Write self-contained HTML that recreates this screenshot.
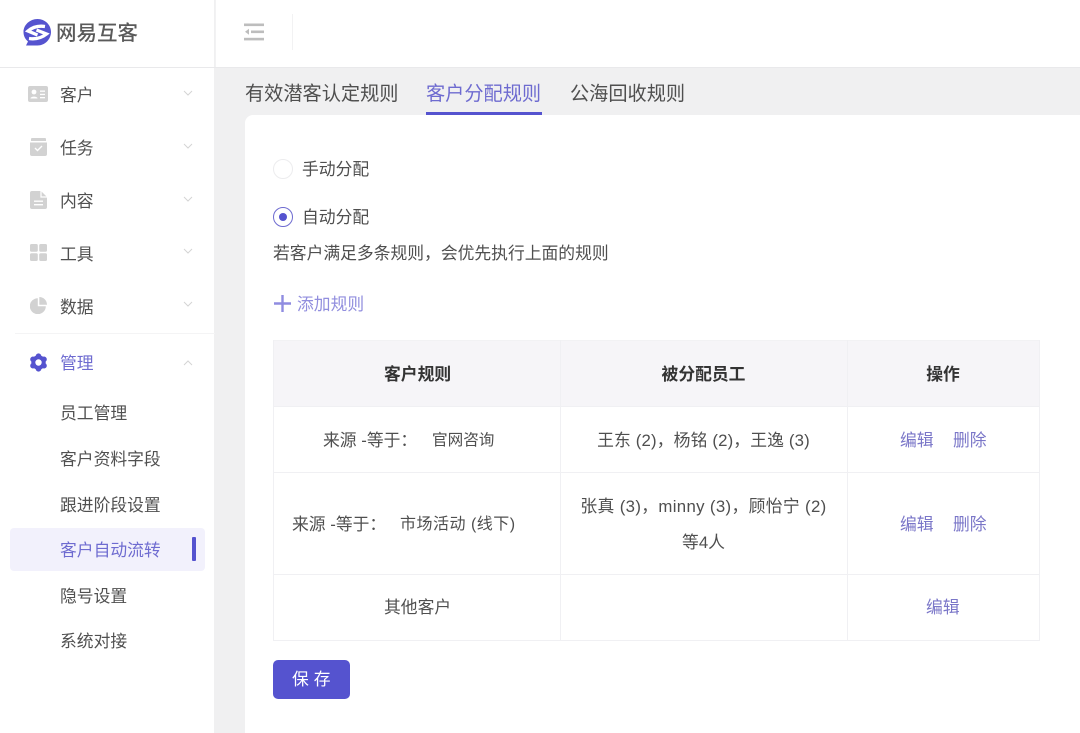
<!DOCTYPE html>
<html lang="zh-CN">
<head>
<meta charset="utf-8">
<title>网易互客</title>
<style>
html,body{margin:0;padding:0;}
body{width:1080px;height:733px;overflow:hidden;position:relative;background:#fff;font-family:"Liberation Sans","Noto Sans CJK SC",sans-serif;color:#4f4f4f;font-size:16.8px;}
.a{position:absolute;white-space:nowrap;line-height:24px;}
.nav{left:60px;color:#505050;}
.sub{left:60px;color:#505050;}
.c{text-align:center;}
.link{color:#7a76c8;}
.th{font-weight:700;color:#333;}
.ln{position:absolute;background:#f0f0f3;}
svg{position:absolute;display:block;}
</style>
</head>
<body>
<!-- content background -->
<div style="position:absolute;left:215px;top:68px;width:865px;height:665px;background:#f0f0f1;"></div>
<!-- sidebar -->
<div style="position:absolute;left:0;top:0;width:215px;height:733px;background:#fff;border-right:1px solid #f0f0f1;box-sizing:border-box;"></div>
<!-- header lines -->
<div style="position:absolute;left:0;top:67px;width:1080px;height:1px;background:#e9e9eb;"></div>
<div style="position:absolute;left:215px;top:0;width:1px;height:67px;background:#f2f2f3;"></div>
<div style="position:absolute;left:292px;top:14px;width:1px;height:36px;background:#f2f2f3;"></div>

<!-- logo -->
<svg style="left:22px;top:18px" width="30" height="30" viewBox="0 0 30 30">
<path d="M15.500 1C23 1 29 6.800 29 14S23 27.500 15.500 27.500H4L6 23.500C3 21 1.500 17.800 1.500 14 1.500 6.800 8 1 15.500 1Z" fill="#5553cf"/>
<path d="M23 8.500Q13 7 6 13L15.500 17" fill="none" stroke="#fff" stroke-width="3.300"/>
<path d="M7 20.500Q17 22 24.500 16L14.500 12" fill="none" stroke="#fff" stroke-width="3.300"/>
</svg>
<div class="a" style="left:56px;top:22px;font-size:20.5px;color:#5a5a5a;font-weight:500;">网易互客</div>

<!-- collapse icon -->
<svg style="left:244px;top:23px" width="21" height="18" viewBox="0 0 21 18">
<rect x="0" y="0.500" width="20" height="2.600" fill="#bdbdbd"/>
<rect x="7" y="7.500" width="13" height="2.600" fill="#bdbdbd"/>
<rect x="0" y="14.800" width="20" height="2.600" fill="#bdbdbd"/>
<path d="M5 5.800 1 8.800l4 3z" fill="#bdbdbd"/>
</svg>

<!-- sidebar icons -->
<svg style="left:28px;top:86px" width="20" height="17" viewBox="0 0 20 17">
<rect width="20" height="16" rx="2" fill="#d2d2d2"/>
<circle cx="6" cy="6" r="2.400" fill="#fff"/><path d="M2.500 12.500c0-2.500 7-2.500 7 0z" fill="#fff"/>
<rect x="12" y="4.500" width="5" height="1.300" fill="#fff"/><rect x="12" y="7.800" width="5" height="1.300" fill="#fff"/><rect x="12" y="11" width="5" height="1.300" fill="#fff"/>
</svg>
<svg style="left:30px;top:138px" width="17" height="18" viewBox="0 0 17 18">
<path d="M2 0h13a1 1 0 0 1 1 1v2H1V1a1 1 0 0 1 1-1Z" fill="#d2d2d2"/>
<path d="M0 4.500h17V16a2 2 0 0 1-2 2H2a2 2 0 0 1-2-2Z" fill="#d2d2d2"/>
<path d="M5 10l2.500 2.500L12 8" fill="none" stroke="#fff" stroke-width="1.400"/>
</svg>
<svg style="left:30px;top:191px" width="17" height="18" viewBox="0 0 17 18">
<path d="M2 0h9l6 6v10a2 2 0 0 1-2 2H2a2 2 0 0 1-2-2V2a2 2 0 0 1 2-2Z" fill="#d2d2d2"/>
<path d="M11 0v6h6" fill="none" stroke="#fff" stroke-width="1.200"/>
<rect x="4" y="9.500" width="9" height="1.400" fill="#fff"/><rect x="4" y="13" width="9" height="1.400" fill="#fff"/>
</svg>
<svg style="left:30px;top:244px" width="17" height="17" viewBox="0 0 17 17">
<rect width="7.800" height="7.800" rx="1.500" fill="#d2d2d2"/><rect x="9.200" width="7.800" height="7.800" rx="1.500" fill="#d2d2d2"/>
<rect y="9.200" width="7.800" height="7.800" rx="1.500" fill="#d2d2d2"/><rect x="9.200" y="9.200" width="7.800" height="7.800" rx="1.500" fill="#d2d2d2"/>
</svg>
<svg style="left:30px;top:297px" width="17" height="17" viewBox="0 0 17 17">
<path d="M7.800 1.200V9.200H15.800A8 8 0 1 1 7.800 1.200Z" fill="#d2d2d2"/>
<path d="M9.300 0A7.800 7.800 0 0 1 17 7.700H9.300Z" fill="#d2d2d2"/>
</svg>
<svg style="left:30px;top:353px" width="17" height="19" viewBox="0 0 17 19">
<g fill="#5553cf"><circle cx="8.500" cy="9.500" r="7.200"/><circle cx="8.500" cy="3.200" r="2.800"/><circle cx="8.500" cy="15.800" r="2.800"/><circle cx="3" cy="6.300" r="2.800"/><circle cx="14" cy="6.300" r="2.800"/><circle cx="3" cy="12.700" r="2.800"/><circle cx="14" cy="12.700" r="2.800"/></g>
<circle cx="8.500" cy="9.500" r="3.200" fill="#fff"/>
</svg>

<!-- sidebar text -->
<div class="a nav" style="top:84px;">客户</div>
<div class="a nav" style="top:137px;">任务</div>
<div class="a nav" style="top:190px;">内容</div>
<div class="a nav" style="top:243px;">工具</div>
<div class="a nav" style="top:296px;">数据</div>
<div class="a nav" style="top:352px;color:#6e6bd0;">管理</div>

<!-- chevrons -->
<svg style="left:183px;top:90px" width="10" height="7" viewBox="0 0 10 7"><path d="M1 1l4 4 4-4" fill="none" stroke="#d4d4d4" stroke-width="1"/></svg>
<svg style="left:183px;top:143px" width="10" height="7" viewBox="0 0 10 7"><path d="M1 1l4 4 4-4" fill="none" stroke="#d4d4d4" stroke-width="1"/></svg>
<svg style="left:183px;top:196px" width="10" height="7" viewBox="0 0 10 7"><path d="M1 1l4 4 4-4" fill="none" stroke="#d4d4d4" stroke-width="1"/></svg>
<svg style="left:183px;top:248px" width="10" height="7" viewBox="0 0 10 7"><path d="M1 1l4 4 4-4" fill="none" stroke="#d4d4d4" stroke-width="1"/></svg>
<svg style="left:183px;top:301px" width="10" height="7" viewBox="0 0 10 7"><path d="M1 1l4 4 4-4" fill="none" stroke="#d4d4d4" stroke-width="1"/></svg>
<svg style="left:183px;top:359px" width="10" height="7" viewBox="0 0 10 7"><path d="M1 6l4-4 4 4" fill="none" stroke="#d4d4d4" stroke-width="1"/></svg>

<div style="position:absolute;left:15px;top:333px;width:200px;height:1px;background:#f4f4f5;"></div>

<div style="position:absolute;left:10px;top:528px;width:195px;height:43px;background:#f2f1fc;border-radius:4px;"></div>
<div style="position:absolute;left:192px;top:537px;width:4px;height:24px;background:#5553cf;border-radius:1px;"></div>

<div class="a sub" style="top:402px;">员工管理</div>
<div class="a sub" style="top:448px;">客户资料字段</div>
<div class="a sub" style="top:494px;">跟进阶段设置</div>
<div class="a sub" style="top:539px;color:#6e6bd0;">客户自动流转</div>
<div class="a sub" style="top:585px;">隐号设置</div>
<div class="a sub" style="top:630px;">系统对接</div>

<!-- tabs -->
<div class="a" style="left:245px;top:83px;font-size:19.200px;color:#4f4f4f;">有效潜客认定规则</div>
<div class="a" style="left:426px;top:83px;font-size:19.200px;color:#6e6bd0;">客户分配规则</div>
<div class="a" style="left:570px;top:83px;font-size:19.200px;color:#4f4f4f;">公海回收规则</div>
<div style="position:absolute;left:426px;top:112px;width:116px;height:3px;background:#5553cf;"></div>

<!-- card -->
<div style="position:absolute;left:245px;top:115px;width:835px;height:618px;background:#fff;border-radius:8px 0 0 0;"></div>

<!-- radios -->
<div style="position:absolute;left:273px;top:159px;width:20px;height:20px;box-sizing:border-box;border:1px solid #ececee;border-radius:50%;background:#fff;"></div>
<div class="a" style="left:302px;top:158px;">手动分配</div>
<div style="position:absolute;left:273px;top:207px;width:20px;height:20px;box-sizing:border-box;border:1px solid #6e6bd0;border-radius:50%;background:#fff;"></div>
<div style="position:absolute;left:279px;top:213px;width:8px;height:8px;border-radius:50%;background:#5553cf;"></div>
<div class="a" style="left:302px;top:206px;">自动分配</div>
<div class="a" style="left:273px;top:242px;">若客户满足多条规则，会优先执行上面的规则</div>

<!-- add rule -->
<svg style="left:274px;top:295px" width="17" height="17" viewBox="0 0 17 17"><path d="M8.500 0v17M0 8.500h17" stroke="#8f8ce0" stroke-width="2.400"/></svg>
<div class="a" style="left:297px;top:293px;color:#918ede;">添加规则</div>

<!-- table -->
<div style="position:absolute;left:273px;top:340px;width:767px;height:66px;background:#f6f5f8;"></div>
<div class="ln" style="left:273px;top:340px;width:767px;height:1px;background:#f2f2f4;"></div>
<div class="ln" style="left:273px;top:406px;width:767px;height:1px;"></div>
<div class="ln" style="left:273px;top:472px;width:767px;height:1px;"></div>
<div class="ln" style="left:273px;top:574px;width:767px;height:1px;"></div>
<div class="ln" style="left:273px;top:640px;width:767px;height:1px;"></div>
<div class="ln" style="left:273px;top:340px;width:1px;height:301px;"></div>
<div class="ln" style="left:560px;top:340px;width:1px;height:301px;"></div>
<div class="ln" style="left:847px;top:340px;width:1px;height:301px;"></div>
<div class="ln" style="left:1039px;top:340px;width:1px;height:301px;"></div>

<div class="a th" style="left:384px;top:363px;">客户规则</div>
<div class="a c th" style="left:560px;width:287px;top:363px;">被分配员工</div>
<div class="a c th" style="left:847px;width:192px;top:363px;">操作</div>

<div class="a" style="left:323px;top:429px;">来源 -等于：</div>
<div class="a" style="left:432px;top:429px;font-size:15.6px;">官网咨询</div>
<div class="a c" style="left:560px;width:287px;top:429px;letter-spacing:.15px;">王东 (2)，杨铭 (2)，王逸 (3)</div>
<div class="a link" style="left:900px;top:429px;">编辑</div>
<div class="a link" style="left:953px;top:429px;">删除</div>

<div class="a" style="left:292px;top:513px;">来源 -等于：</div>
<div class="a" style="left:400px;top:513px;font-size:16px;letter-spacing:.5px;">市场活动 (线下)</div>
<div class="a c" style="left:560px;width:287px;top:495px;letter-spacing:.35px;">张真 (3)，minny (3)，顾怡宁 (2)</div>
<div class="a c" style="left:560px;width:287px;top:531px;">等4人</div>
<div class="a link" style="left:900px;top:513px;">编辑</div>
<div class="a link" style="left:953px;top:513px;">删除</div>

<div class="a" style="left:384px;top:596px;">其他客户</div>
<div class="a link" style="left:926px;top:596px;">编辑</div>

<!-- save -->
<div style="position:absolute;left:273px;top:660px;width:77px;height:39px;background:#5553cf;border-radius:5px;"></div>
<div class="a" style="left:292px;top:668px;color:#fff;letter-spacing:5px;">保存</div>
</body>
</html>
